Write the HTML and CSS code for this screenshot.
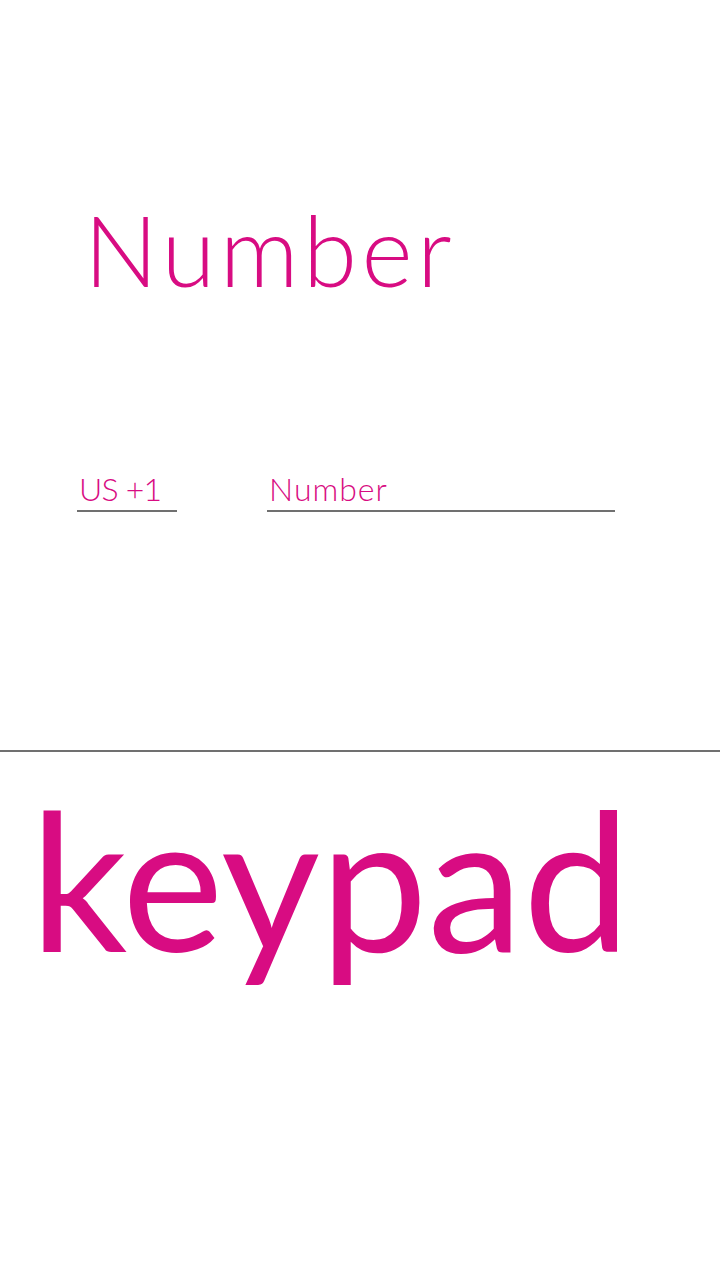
FILE: index.html
```html
<!DOCTYPE html>
<html>
<head>
<meta charset="utf-8">
<link rel="stylesheet" href="styles.css">
</head>
<body>
<div class="screen">
  <section class="form">
    <h1 class="title">Number</h1>
    <div class="fields">
      <div class="field country">US +1</div>
      <div class="field number">Number</div>
    </div>
  </section>
  <section class="keypad">
    <div class="keypad-label">keypad</div>
  </section>
</div>
</body>
</html>
```
FILE: styles.css
```css
html, body {
  margin: 0;
  padding: 0;
  background: #ffffff;
}
.screen {
  width: 720px;
  height: 1280px;
  display: flex;
  flex-direction: column;
  font-family: Lato, "Noto Sans", sans-serif;
  color: #d80c82;
}
.form {
  box-sizing: border-box;
  border-bottom: 2px solid #707070;
  height: 752px;
  padding: 200px 0 0 0;
}
.title {
  margin: 0 0 0 84px;
  font-weight: 300;
  font-size: 98px;
  line-height: 98px;
  letter-spacing: 4.4px;
}
.fields {
  display: flex;
  gap: 90px;
  margin: 172px 0 0 77px;
}
.field {
  border-bottom: 2px solid #707070;
  font-size: 32px;
  line-height: 38px;
  padding: 0 0 2px 2px;
  font-weight: 300;
}
.country {
  width: 98px;
  letter-spacing: -0.8px;
}
.number {
  width: 346px;
  letter-spacing: 1px;
}
.keypad {
  padding: 30px 0 0 30px;
}
.keypad-label {
  font-size: 192px;
  line-height: 192px;
}
```
